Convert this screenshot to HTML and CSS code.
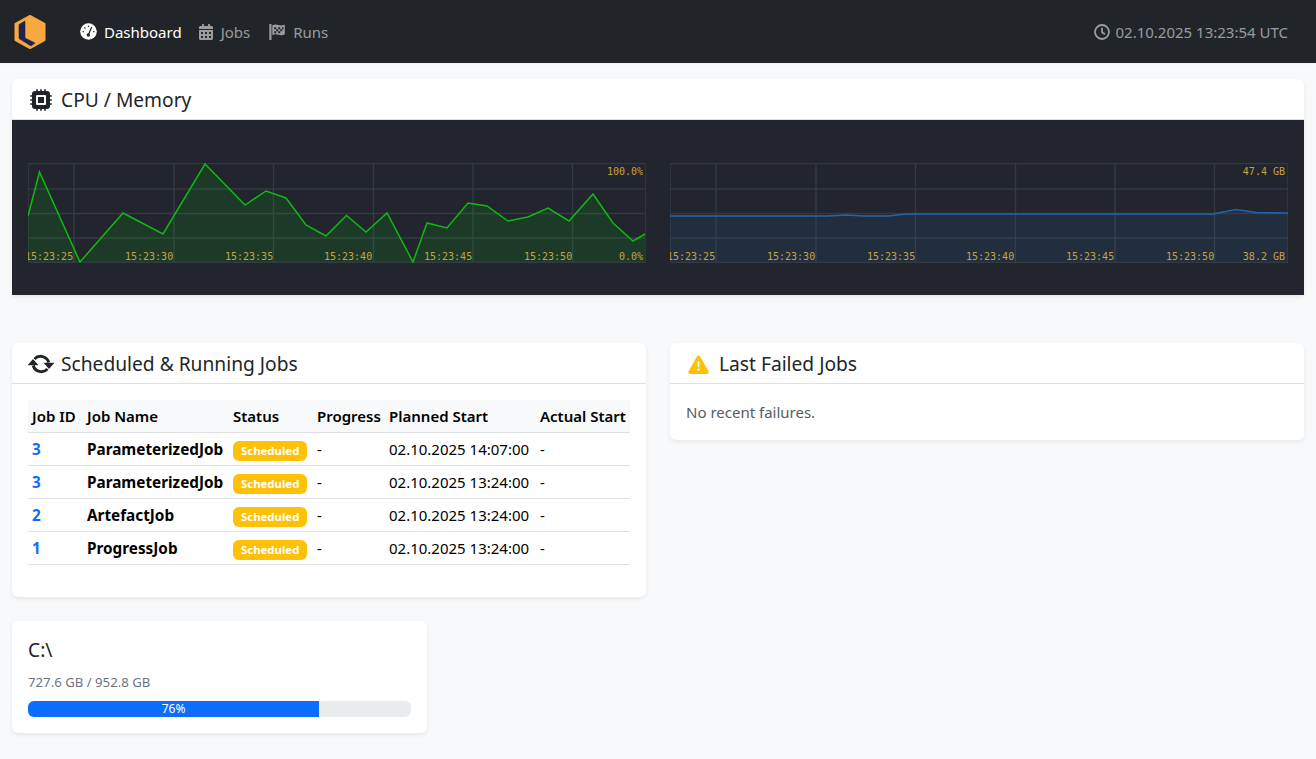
FILE: index.html
```html
<!DOCTYPE html>
<html lang="en">
<head>
<meta charset="utf-8">
<title>Dashboard</title>
<link rel="stylesheet" href="styles.css">
</head>
<body>
<nav class="navbar">
  <svg class="logo" viewBox="0 0 32 34" width="32" height="34">
    <path d="M16 1 L30.500 9 V25 L16 33 L1.500 25 V9 Z" fill="#f7a93f" stroke="#f7a93f" stroke-linejoin="round" stroke-width="2"/>
    <path d="M5 9.500 L11 6 V23 L21 28 L17 31 L5 23.500 Z" fill="#1f2350" stroke="#1f2350" stroke-linejoin="round" stroke-width=".6"/>
  </svg>
  <ul class="nav-list">
    <li class="nav-item active">
      <svg class="nav-icon nav-icon-gauge" viewBox="0 0 17 17">
        <circle cx="8.500" cy="8.500" r="8.300" fill="#fff"/>
        <g fill="none" stroke="#212529" stroke-linecap="round">
          <path stroke-width="1.300" d="M8.500 3.200v.3M4.800 4.800l.3.3M3.100 8.700h.3M13.600 8.700h.3"/>
          <path stroke-width="1.200" d="M11.500 4.600 8.600 11.200"/>
        </g>
        <circle cx="8.300" cy="12" r="1.700" fill="#212529"/>
      </svg>
      Dashboard
    </li>
    <li class="nav-item">
      <svg class="nav-icon" viewBox="0 0 448 512"><path fill="currentColor" d="M0 464c0 26.500 21.500 48 48 48h352c26.500 0 48-21.500 48-48V192H0v272zm320-196c0-6.600 5.400-12 12-12h40c6.600 0 12 5.400 12 12v40c0 6.600-5.400 12-12 12h-40c-6.600 0-12-5.400-12-12v-40zm0 128c0-6.600 5.400-12 12-12h40c6.600 0 12 5.400 12 12v40c0 6.600-5.400 12-12 12h-40c-6.600 0-12-5.400-12-12v-40zM192 268c0-6.600 5.400-12 12-12h40c6.600 0 12 5.400 12 12v40c0 6.600-5.400 12-12 12h-40c-6.600 0-12-5.400-12-12v-40zm0 128c0-6.600 5.400-12 12-12h40c6.600 0 12 5.400 12 12v40c0 6.600-5.400 12-12 12h-40c-6.600 0-12-5.400-12-12v-40zM64 268c0-6.600 5.400-12 12-12h40c6.600 0 12 5.400 12 12v40c0 6.600-5.400 12-12 12H76c-6.600 0-12-5.400-12-12v-40zm0 128c0-6.600 5.400-12 12-12h40c6.600 0 12 5.400 12 12v40c0 6.600-5.400 12-12 12H76c-6.600 0-12-5.400-12-12v-40zM400 64h-48V16c0-8.800-7.200-16-16-16h-32c-8.800 0-16 7.200-16 16v48H160V16c0-8.800-7.200-16-16-16h-32c-8.800 0-16 7.200-16 16v48H48C21.500 64 0 85.500 0 112v48h448v-48c0-26.500-21.500-48-48-48z"/></svg>
      Jobs
    </li>
    <li class="nav-item nav-runs">
      <svg class="nav-icon" viewBox="0 0 16 16"><path fill="currentColor" fill-rule="evenodd" d="M.300 0h2.200v16H.300zM3.300 1.300c2.500-1.200 4.500-.9 6.300-.2 2 .7 3.900.5 6.200-.4v9.600c-2.300 1-4.200 1.200-6.200.4-1.800-.7-3.800-.9-6.300.2zM5.200 3.200v2h2v-2zM9.200 3.200v2h2v-2zM13 3.200v2h1.500v-2zM7.200 5.200v2h2v-2zM11.200 5.200v2h2v-2zM5.200 7.200v2h2v-2zM9.200 7.200v2h2v-2z"/></svg>
      Runs
    </li>
  </ul>
  <div class="clock">
    <svg class="nav-icon" viewBox="0 0 16 16"><circle cx="8" cy="8" r="7" fill="none" stroke="currentColor" stroke-width="1.800"/><path d="M8 3.800V8.300L11 10.300" fill="none" stroke="currentColor" stroke-width="1.800"/></svg>
    02.10.2025 13:23:54 UTC
  </div>
</nav>

<main class="page">
  <section class="card card-charts">
    <header class="card-header">
      <svg class="h-icon h-cpu" viewBox="0 0 22 22"><path fill="#212529" fill-rule="evenodd" d="M5 2h12a3 3 0 0 1 3 3v12a3 3 0 0 1-3 3H5a3 3 0 0 1-3-3V5a3 3 0 0 1 3-3zM7 6a1 1 0 0 0-1 1v8a1 1 0 0 0 1 1h8a1 1 0 0 0 1-1V7a1 1 0 0 0-1-1zM8 8h6v6H8z"/><path stroke="#212529" stroke-width="1.600" stroke-linecap="round" d="M7 .8v2M11 .8v2M15 .8v2M7 19.200v2M11 19.200v2M15 19.200v2M.8 7h2M.8 11h2M.8 15h2M19.200 7h2M19.200 11h2M19.200 15h2"/></svg>
      <span>CPU / Memory</span>
    </header>
    <div class="charts">
      <svg class="chart" viewBox="0 0 618 100" width="618" height="100">
        <g class="grid">
          <path d="M0 .5H618V99.500H0ZM0 26H618M0 50.500H618M0 75H618M46 0V100M146 0V100M245.500 0V100M345.500 0V100M445 0V100M544.500 0V100"/>
        </g>
        <polygon class="cpu-fill" points="0,53 11.500,9 52,99 95,50 135,71 177,1 217,42 238,28 258,35 278,62 298,73 318.500,52.500 338,69 359,50 385,99 399,60 419,65 440,40 459,43 480,58 500,54 520,45 541,58 565,31 585,60 605,78 617,71 617,99 0,99"/>
        <polyline class="cpu-line" points="0,53 11.500,9 52,99 95,50 135,71 177,1 217,42 238,28 258,35 278,62 298,73 318.500,52.500 338,69 359,50 385,99 399,60 419,65 440,40 459,43 480,58 500,54 520,45 541,58 565,31 585,60 605,78 617,71"/>
        <g class="labels">
          <text x="-3" y="97">15:23:25</text>
          <text x="97" y="97">15:23:30</text>
          <text x="197" y="97">15:23:35</text>
          <text x="296" y="97">15:23:40</text>
          <text x="396" y="97">15:23:45</text>
          <text x="496" y="97">15:23:50</text>
          <text x="615" y="97" text-anchor="end">0.0%</text>
          <text x="615" y="12" text-anchor="end">100.0%</text>
        </g>
      </svg>
      <svg class="chart" viewBox="0 0 618 100" width="618" height="100">
        <g class="grid">
          <path d="M0 .5H618V99.500H0ZM0 26H618M0 50.500H618M0 75H618M46 0V100M146 0V100M245.500 0V100M345.500 0V100M445 0V100M544.500 0V100"/>
        </g>
        <polygon class="mem-fill" points="0,53 157,53 177,52 193,53 218,53 237,51 543,51 566,46.500 586,49.500 618,50 618,99 0,99"/>
        <polyline class="mem-line" points="0,53 157,53 177,52 193,53 218,53 237,51 543,51 566,46.500 586,49.500 618,50"/>
        <g class="labels">
          <text x="-3" y="97">15:23:25</text>
          <text x="97" y="97">15:23:30</text>
          <text x="197" y="97">15:23:35</text>
          <text x="296" y="97">15:23:40</text>
          <text x="396" y="97">15:23:45</text>
          <text x="496" y="97">15:23:50</text>
          <text x="615" y="97" text-anchor="end">38.2 GB</text>
          <text x="615" y="12" text-anchor="end">47.4 GB</text>
        </g>
      </svg>
    </div>
  </section>

  <div class="row-two">
    <section class="card">
      <header class="card-header">
        <svg class="h-icon h-sync" viewBox="0 0 26 20">
          <g fill="none" stroke="#212529" stroke-width="3">
            <path d="M6.500 5A8.500 8.500 0 0 1 20.800 8.500"/>
            <path d="M19.500 15A8.500 8.500 0 0 1 5.200 11.500"/>
          </g>
          <path fill="#212529" d="M15.500 8.800h11L21 15zM-.5 11.200h11L5 5z"/>
        </svg>
        <span>Scheduled &amp; Running Jobs</span>
      </header>
      <div class="card-body body-jobs">
        <table class="jobs">
          <colgroup>
            <col class="c-id"><col class="c-name"><col class="c-status"><col class="c-progress"><col class="c-planned"><col class="c-actual">
          </colgroup>
          <thead>
            <tr><th>Job ID</th><th>Job Name</th><th>Status</th><th>Progress</th><th>Planned Start</th><th>Actual Start</th></tr>
          </thead>
          <tbody>
            <tr><td class="id">3</td><td class="name">ParameterizedJob</td><td><span class="badge">Scheduled</span></td><td>-</td><td>02.10.2025 14:07:00</td><td>-</td></tr>
            <tr><td class="id">3</td><td class="name">ParameterizedJob</td><td><span class="badge">Scheduled</span></td><td>-</td><td>02.10.2025 13:24:00</td><td>-</td></tr>
            <tr><td class="id">2</td><td class="name">ArtefactJob</td><td><span class="badge">Scheduled</span></td><td>-</td><td>02.10.2025 13:24:00</td><td>-</td></tr>
            <tr><td class="id">1</td><td class="name">ProgressJob</td><td><span class="badge">Scheduled</span></td><td>-</td><td>02.10.2025 13:24:00</td><td>-</td></tr>
          </tbody>
        </table>
      </div>
    </section>
    <section class="card card-failed">
      <header class="card-header">
        <svg class="h-icon h-warn" viewBox="0 0 22 20"><path fill="#ffc107" d="M11 .5c.7 0 1.300.4 1.700 1l8.800 15.500c.7 1.300-.2 2.900-1.700 2.900H2.200C.7 19.900-.2 18.300.5 17L9.300 1.500c.4-.6 1-1 1.700-1z"/><path fill="#fff" d="M9.900 6.500h2.200l-.4 6.500h-1.400zM11 14.300a1.200 1.200 0 1 1 0 2.400 1.200 1.200 0 0 1 0-2.400z"/></svg>
        <span>Last Failed Jobs</span>
      </header>
      <div class="card-body body-failed">No recent failures.</div>
    </section>
  </div>

  <section class="card card-disk">
    <h5 class="disk-title">C:\</h5>
    <p class="disk-size">727.6 GB / 952.8 GB</p>
    <div class="progress"><div class="progress-bar" style="width:76%">76%</div></div>
  </section>
</main>
</body>
</html>
```
FILE: styles.css
```css
* { box-sizing: border-box; }
html, body { margin: 0; height: 100%; overflow: hidden; }
body {
  background: #f8f9fa;
  color: #212529;
  font-family: "Noto Sans", "Open Sans", sans-serif;
  font-size: 15px;
  line-height: 24px;
}
.navbar {
  height: 63px;
  background: #212529;
  display: flex;
  align-items: center;
  padding: 0 28px 0 14px;
  box-shadow: 0 1px 2px rgba(0,0,0,.04);
}
.logo { flex: none; }
.nav-list {
  list-style: none;
  display: flex;
  margin: 0 0 0 34px;
  padding: 0;
  gap: 16px;
}
.nav-item {
  display: flex;
  align-items: center;
  gap: 7px;
  color: rgba(255,255,255,.55);
  white-space: nowrap;
}
.nav-item.active { color: #fff; }
.nav-runs { margin-left: 3px; gap: 8px; }
.nav-icon { width: 16px; height: 16px; flex: none; }
.nav-icon-gauge { width: 17px; height: 17px; }
.clock {
  margin-left: auto;
  display: flex;
  align-items: center;
  gap: 6px;
  color: rgba(255,255,255,.55);
  white-space: nowrap;
}
.page { padding: 16px 12px 0; }
.card {
  background: #fff;
  border-radius: 6px;
  box-shadow: 0 2px 4px rgba(0,0,0,.075);
  overflow: hidden;
}
.card-charts { border-radius: 6px 6px 0 0; }
.card-header {
  height: 41px;
  display: flex;
  align-items: center;
  gap: 8px;
  padding: 2px 16px 0;
  border-bottom: 1px solid #dee2e6;
  font-size: 19.200px;
  white-space: nowrap;
}
.h-icon { flex: none; }
.h-cpu { width: 22px; height: 22px; margin-left: 2px; margin-right: 1px; }
.h-sync { width: 26px; height: 20px; margin-right: -1px; }
.h-warn { width: 21px; height: 19px; margin-left: 2px; margin-right: 2px; }
.charts {
  height: 175px;
  background: #22252e;
  display: flex;
  justify-content: space-between;
  padding: 43px 16px 0;
}
.chart { display: block; flex: none; }
.grid path { fill: none; stroke: #353a42; stroke-width: 1.400; }
.labels text {
  font-family: "DejaVu Sans Mono", "Liberation Mono", monospace;
  font-size: 10px;
  fill: #c6a33e;
}
.cpu-fill { fill: rgba(0,200,0,.13); }
.cpu-line { fill: none; stroke: #0dbb0d; stroke-width: 1.500; }
.mem-fill { fill: rgba(40,120,200,.1); }
.mem-line { fill: none; stroke: #2066ae; stroke-width: 1.500; }
.row-two {
  display: grid;
  grid-template-columns: 634px 634px;
  gap: 24px;
  align-items: start;
  margin-top: 48px;
}
.body-jobs { padding: 16px 16px 32px; }
.jobs {
  width: 602px;
  table-layout: fixed;
  border-collapse: collapse;
  color: #000;
  font-size: 15px;
}
.c-id { width: 55px; }
.c-name { width: 146px; }
.c-status { width: 84px; }
.c-progress { width: 72px; }
.c-planned { width: 151px; }
.c-actual { width: 94px; }
.jobs th, .jobs td {
  height: 33px;
  padding: 0 4px;
  border-bottom: 1px solid #dee2e6;
  text-align: left;
  white-space: nowrap;
}
.jobs th { height: 32.500px; background: #f8f9fa; font-weight: 600; font-size: 15px; }
.jobs .id { color: #0d6efd; font-weight: 700; font-size: 15.300px; }
.jobs .name { font-weight: 700; font-size: 15.300px; }
.badge {
  display: inline-block;
  background: #ffc107;
  color: #fff;
  font-size: 11.400px;
  font-weight: 700;
  line-height: 20px;
  padding: 0 8px;
  border-radius: 6px;
  vertical-align: 0;
}
.body-failed { padding: 16px; color: #555c63; font-size: 15px; height: 56px; line-height: 24px; }
.card-disk {
  width: 415px;
  height: 112px;
  margin-top: 24px;
  padding: 16px;
}
.disk-title { margin: 0; font-size: 19.200px; font-weight: 400; line-height: 26px; }
.disk-size { margin: 9px 0 0; font-size: 13.200px; line-height: 20px; color: #6c757d; }
.progress {
  height: 16px;
  margin-top: 9px;
  background: #e9ecef;
  border-radius: 6px;
  overflow: hidden;
}
.progress-bar {
  height: 100%;
  background: #0d6efd;
  color: #fff;
  font-size: 12px;
  line-height: 16px;
  text-align: center;
}
```
